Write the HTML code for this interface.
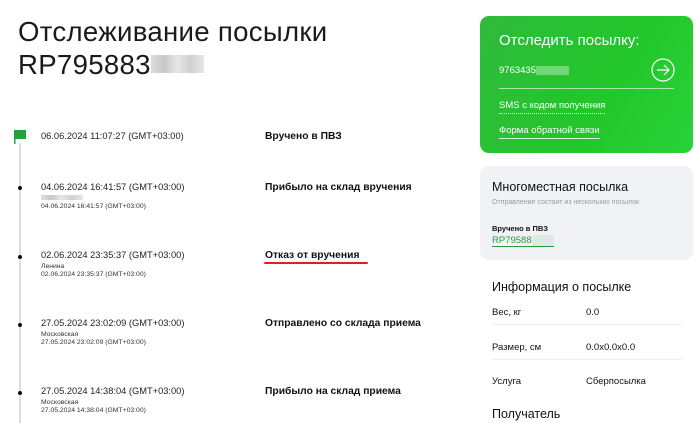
<!DOCTYPE html>
<html><head><meta charset="utf-8"><style>
*{margin:0;padding:0;box-sizing:border-box}
body{width:700px;height:416px;overflow:hidden;background:#fff;font-family:"Liberation Sans","DejaVu Sans",sans-serif;color:#111;position:relative}
.a{position:absolute;white-space:nowrap}
h1{position:absolute;left:18px;top:15px;font-weight:normal;font-size:27.6px;line-height:33px;color:#1a1a1a;letter-spacing:0.3px}
.blur{display:inline-block;background:linear-gradient(90deg,#ddd,#c8c8c8,#e6e6e6,#cfcfcf,#e8e8e8);vertical-align:middle}
.line{position:absolute;left:19px;top:143px;width:2px;height:280px;background:#ddd}
.dot{position:absolute;left:18px;width:4px;height:4px;border-radius:2px;background:#111}
.dt{font-size:9.3px;color:#222}
.sm{font-size:6.8px;color:#333}
.st{font-size:10.3px;font-weight:bold;color:#111}
.green{position:absolute;left:480px;top:16px;width:213px;height:137px;border-radius:9px;background:linear-gradient(120deg,#2fba3c,#22c72a 60%,#2ad23a)}
.grey{position:absolute;left:480px;top:166px;width:213px;height:94px;border-radius:9px;background:#f1f2f5}
.row{position:absolute;left:492px;width:190px;border-bottom:1px solid #eceef0}
</style></head><body>
<h1>Отслеживание посылки<br>RP795883<span class="blur" style="width:53px;height:18px;margin-top:-6px"></span></h1>

<div class="line"></div>
<svg class="a" style="left:13px;top:129px" width="14" height="16" viewBox="0 0 14 16"><rect x="1" y="1" width="1.5" height="14" fill="#2a9d3a"/><path d="M1 1h12v9H1z" fill="#22a33a"/></svg>
<div class="dot" style="top:186px"></div>
<div class="dot" style="top:255px"></div>
<div class="dot" style="top:323px"></div>
<div class="dot" style="top:391px"></div>

<div class="a dt" style="left:41px;top:131px">06.06.2024 11:07:27 (GMT+03:00)</div>
<div class="a st" style="left:265px;top:131px">Вручено в ПВЗ</div>

<div class="a dt" style="left:41px;top:182px">04.06.2024 16:41:57 (GMT+03:00)</div>
<div class="a blur" style="left:41px;top:195px;width:42px;height:5px"></div>
<div class="a sm" style="left:41px;top:203px">04.06.2024 16:41:57 (GMT+03:00)</div>
<div class="a st" style="left:265px;top:182px">Прибыло на склад вручения</div>

<div class="a dt" style="left:41px;top:250px">02.06.2024 23:35:37 (GMT+03:00)</div>
<div class="a sm" style="left:41px;top:263px">Ленина</div>
<div class="a sm" style="left:41px;top:271px">02.06.2024 23:35:37 (GMT+03:00)</div>
<div class="a st" style="left:265px;top:250px">Отказ от вручения</div>
<div class="a" style="left:264px;top:262px;width:104px;height:2px;background:#e02020;border-radius:1px"></div>

<div class="a dt" style="left:41px;top:318px">27.05.2024 23:02:09 (GMT+03:00)</div>
<div class="a sm" style="left:41px;top:331px">Московская</div>
<div class="a sm" style="left:41px;top:339px">27.05.2024 23:02:09 (GMT+03:00)</div>
<div class="a st" style="left:265px;top:318px">Отправлено со склада приема</div>

<div class="a dt" style="left:41px;top:386px">27.05.2024 14:38:04 (GMT+03:00)</div>
<div class="a sm" style="left:41px;top:399px">Московская</div>
<div class="a sm" style="left:41px;top:407px">27.05.2024 14:38:04 (GMT+03:00)</div>
<div class="a st" style="left:265px;top:386px">Прибыло на склад приема</div>

<div class="green"></div>
<div class="a" style="left:499px;top:32px;font-size:15px;color:#fff">Отследить посылку:</div>
<div class="a" style="left:499px;top:65px;font-size:9.5px;color:#fff">9763435<span style="display:inline-block;width:33px;height:9px;background:rgba(255,255,255,.35);vertical-align:middle"></span></div>
<svg class="a" style="left:651px;top:58px" width="24" height="24" viewBox="0 0 24 24"><circle cx="12" cy="12" r="11" fill="none" stroke="#fff" stroke-width="1.2"/><path d="M6 12h12M13 7l5 5-5 5" fill="none" stroke="#fff" stroke-width="1.2"/></svg>
<div class="a" style="left:499px;top:88px;width:175px;height:1px;background:rgba(255,255,255,.6)"></div>
<div class="a" style="left:499px;top:100px;font-size:9.5px;color:#fff;border-bottom:1px dotted rgba(255,255,255,.8);padding-bottom:2px">SMS с кодом получения</div>
<div class="a" style="left:499px;top:125px;font-size:9.5px;color:#fff;border-bottom:1px solid rgba(255,255,255,.8);padding-bottom:2px">Форма обратной связи</div>

<div class="grey"></div>
<div class="a" style="left:492px;top:180px;font-size:12.5px;color:#111">Многоместная посылка</div>
<div class="a" style="left:492px;top:199px;font-size:7px;color:#999">Отправление состоит из нескольких посылок</div>
<div class="a" style="left:492px;top:224px;font-size:7.5px;font-weight:bold;color:#111">Вручено в ПВЗ</div>
<div class="a" style="left:492px;top:235px;font-size:9.5px;color:#2c9a3e;border-bottom:1px solid #2c9a3e">RP79588<span style="display:inline-block;width:22px;height:11px;background:#dfe8e2;vertical-align:middle"></span></div>

<div class="a" style="left:492px;top:280px;font-size:12.5px;color:#111">Информация о посылке</div>
<div class="row" style="top:305px;height:20px"></div>
<div class="a" style="left:492px;top:307px;font-size:9.5px">Вес, кг</div>
<div class="a" style="left:586px;top:307px;font-size:9.5px">0.0</div>
<div class="row" style="top:340px;height:20px"></div>
<div class="a" style="left:492px;top:342px;font-size:9.5px">Размер, см</div>
<div class="a" style="left:586px;top:342px;font-size:9.5px">0.0x0.0x0.0</div>
<div class="a" style="left:492px;top:376px;font-size:9.5px">Услуга</div>
<div class="a" style="left:586px;top:376px;font-size:9.5px">Сберпосылка</div>
<div class="a" style="left:492px;top:407px;font-size:12.5px">Получатель</div>
</body></html>
